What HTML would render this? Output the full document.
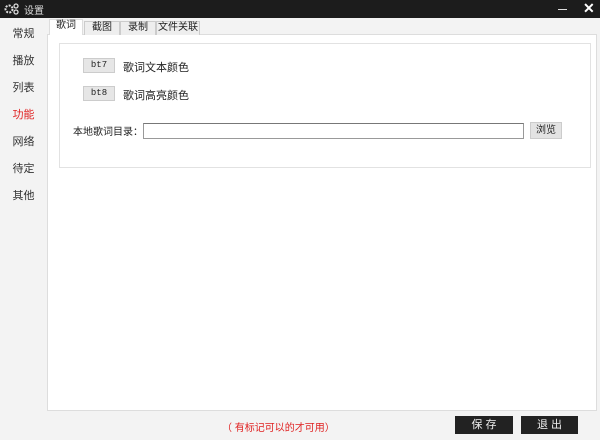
<!DOCTYPE html>
<html><head><meta charset="utf-8"><style>
*{margin:0;padding:0;box-sizing:border-box}
body{width:600px;height:440px;overflow:hidden;background:#f3f3f3;font-family:"Liberation Sans","Noto Sans CJK SC",sans-serif;font-size:11px;color:#222;position:relative}
.a{position:absolute}
#title{left:0;top:0;width:600px;height:18px;background:#1c1c1c;color:#ddd}
.side{left:0;width:47px;text-align:center;font-size:11px;color:#333}
.tab{top:21px;height:14px;border:1px solid #ccc;border-bottom:none;background:#eee;font-size:10px;text-align:center;line-height:12px}
.btn{background:#e6e6e6;border:1px solid #ccc;font-family:"Liberation Mono",monospace;font-size:9px;text-align:center}
</style></head><body>
<div id="title" class="a">
<svg class="a" style="left:4px;top:3px" width="16" height="12" viewBox="0 0 16 12"><circle cx="5" cy="6" r="3.5" fill="none" stroke="#ddd" stroke-width="2" stroke-dasharray="2 1.2"/><circle cx="12" cy="3" r="2" fill="none" stroke="#ddd" stroke-width="1.3"/><circle cx="12" cy="9" r="2" fill="none" stroke="#ddd" stroke-width="1.3"/></svg>
<span class="a" style="left:24px;top:2px;font-size:10px">设置</span>
<div class="a" style="left:558px;top:9px;width:9px;height:1px;background:#ddd"></div>
<span class="a" style="left:583px;top:0px;font-size:14px;color:#fff;font-weight:bold">✕</span>
</div>
<div class="a side" style="top:25px">常规</div>
<div class="a side" style="top:52px">播放</div>
<div class="a side" style="top:79px">列表</div>
<div class="a side" style="top:106px;color:#e02020">功能</div>
<div class="a side" style="top:133px">网络</div>
<div class="a side" style="top:160px">待定</div>
<div class="a side" style="top:187px">其他</div>
<div class="a" style="left:47px;top:34px;width:550px;height:377px;background:#fff;border:1px solid #ddd"></div>
<div class="a tab" style="left:49px;top:19px;width:34px;height:16px;background:#fff;border-color:#ddd">歌词</div>
<div class="a tab" style="left:84px;width:36px">截图</div>
<div class="a tab" style="left:120px;width:36px">录制</div>
<div class="a tab" style="left:156px;width:44px">文件关联</div>
<div class="a" style="left:59px;top:43px;width:532px;height:125px;border:1px solid #e2e2e2;background:#fff"></div>
<div class="a btn" style="left:83px;top:58px;width:32px;height:15px;line-height:13px">bt7</div>
<span class="a" style="left:123px;top:59px">歌词文本颜色</span>
<div class="a btn" style="left:83px;top:86px;width:32px;height:15px;line-height:13px">bt8</div>
<span class="a" style="left:123px;top:87px">歌词高亮颜色</span>
<span class="a" style="left:73px;top:123px;font-size:10px">本地歌词目录：</span>
<div class="a" style="left:143px;top:123px;width:381px;height:16px;border:1px solid #999;border-top-color:#777;background:#fff"></div>
<div class="a" style="left:530px;top:122px;width:32px;height:17px;background:#e3e3e3;border:1px solid #ccc;text-align:center;font-size:10px;line-height:15px">浏览</div>
<span class="a" style="left:222px;top:419px;color:#e02020;font-size:10px">（ 有标记可以的才可用）</span>
<div class="a" style="left:455px;top:416px;width:58px;height:18px;background:#222;color:#eee;text-align:center;line-height:18px;font-size:11px">保 存</div>
<div class="a" style="left:521px;top:416px;width:57px;height:18px;background:#222;color:#eee;text-align:center;line-height:18px;font-size:11px">退 出</div>
</body></html>
